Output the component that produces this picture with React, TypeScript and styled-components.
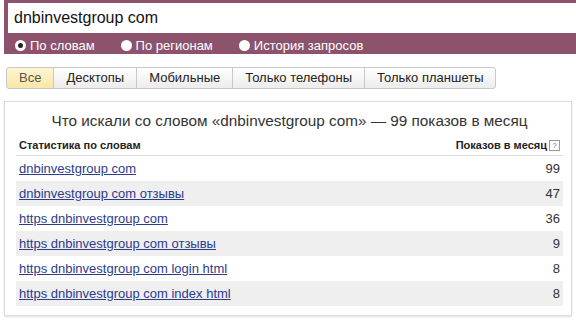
import React from "react";
import styled, { createGlobalStyle } from "styled-components";

const GlobalStyle = createGlobalStyle`
  body {
    margin: 0;
    background: #fff;
    font-family: "Liberation Sans", Arial, sans-serif;
  }
`;

const Page = styled.div`
  width: 576px;
  height: 324px;
  overflow: hidden;
`;

const SearchBar = styled.div`
  margin-left: 4px;
  background: #8d536c;
  padding: 3px 0 0 4px;
  height: 54px;
  box-sizing: border-box;
`;

const QueryInput = styled.div`
  height: 30px;
  background: #fff;
  font-size: 16px;
  line-height: 30px;
  padding-left: 6px;
  color: #111;
`;

const RadioRow = styled.div`
  display: flex;
  align-items: center;
  height: 24px;
  padding-left: 7px;
  gap: 26px;
`;

const RadioItem = styled.label`
  display: flex;
  align-items: center;
  gap: 4px;
  color: #fff;
  font-size: 13px;
`;

const RadioDot = styled.span<{ $checked?: boolean }>`
  width: 11px;
  height: 11px;
  border-radius: 50%;
  background: #fff;
  box-sizing: border-box;
  border: ${(p) => (p.$checked ? "3px solid #fff" : "none")};
  ${(p) => (p.$checked ? "background: #222;" : "")}
`;

const Tabs = styled.div`
  display: flex;
  margin: 13px 0 0 6px;
`;

const Tab = styled.div<{ $active?: boolean }>`
  height: 22px;
  box-sizing: border-box;
  padding: 0 12px;
  font-size: 13px;
  line-height: 20px;
  border: 1px solid #c8c8c8;
  margin-left: -1px;
  background: ${(p) =>
    p.$active
      ? "linear-gradient(#fff6d2, #f8e6a4)"
      : "linear-gradient(#ffffff, #ececec)"};
  color: ${(p) => (p.$active ? "#555" : "#222")};
  &:first-child {
    border-radius: 3px 0 0 3px;
    margin-left: 0;
  }
  &:last-child {
    border-radius: 0 3px 3px 0;
  }
`;

const Panel = styled.div`
  margin: 12px 0 0 4px;
  width: 568px;
  height: 215px;
  box-sizing: border-box;
  border: 1px solid #dcdcdc;
  box-shadow: 0 1px 2px rgba(0, 0, 0, 0.12);
  padding: 0 8px 0 11px;
`;

const Title = styled.div`
  text-align: center;
  font-size: 15.3px;
  color: #333;
  height: 33px;
  line-height: 38px;
`;

const Table = styled.div`
  display: flex;
  flex-direction: column;
`;

const HeadRow = styled.div`
  display: flex;
  justify-content: space-between;
  align-items: center;
  height: 20px;
  border-bottom: 1px solid #dedede;
  font-size: 11px;
  font-weight: bold;
  color: #222;
  padding: 0 3px;
`;

const HeadRight = styled.span`
  display: flex;
  align-items: center;
  gap: 2px;
`;

const HelpIcon = styled.span`
  width: 9px;
  height: 9px;
  border: 1px solid #999;
  font-size: 8px;
  line-height: 9px;
  text-align: center;
  color: #777;
  font-weight: normal;
`;

const Row = styled.div<{ $shaded?: boolean }>`
  display: flex;
  justify-content: space-between;
  align-items: center;
  height: 25px;
  padding: 0 3px;
  font-size: 13px;
  background: ${(p) => (p.$shaded ? "#efefef" : "transparent")};
`;

const Phrase = styled.a`
  color: #2c3c8c;
  text-decoration: underline;
`;

const Count = styled.span`
  color: #333;
`;

const rows: [string, number][] = [
  ["dnbinvestgroup com", 99],
  ["dnbinvestgroup com отзывы", 47],
  ["https dnbinvestgroup com", 36],
  ["https dnbinvestgroup com отзывы", 9],
  ["https dnbinvestgroup com login html", 8],
  ["https dnbinvestgroup com index html", 8],
];

const App = () => {
  return (
    <Page>
      <GlobalStyle />
      <SearchBar>
        <QueryInput>dnbinvestgroup com</QueryInput>
        <RadioRow>
          <RadioItem>
            <RadioDot $checked />
            По словам
          </RadioItem>
          <RadioItem>
            <RadioDot />
            По регионам
          </RadioItem>
          <RadioItem>
            <RadioDot />
            История запросов
          </RadioItem>
        </RadioRow>
      </SearchBar>
      <Tabs>
        <Tab $active>Все</Tab>
        <Tab>Десктопы</Tab>
        <Tab>Мобильные</Tab>
        <Tab>Только телефоны</Tab>
        <Tab>Только планшеты</Tab>
      </Tabs>
      <Panel>
        <Title>Что искали со словом «dnbinvestgroup com» — 99 показов в месяц</Title>
        <Table>
          <HeadRow>
            <span>Статистика по словам</span>
            <HeadRight>
              Показов в месяц
              <HelpIcon>?</HelpIcon>
            </HeadRight>
          </HeadRow>
          {rows.map(([phrase, count], i) => (
            <Row key={phrase} $shaded={i % 2 === 1}>
              <Phrase>{phrase}</Phrase>
              <Count>{count}</Count>
            </Row>
          ))}
        </Table>
      </Panel>
    </Page>
  );
};

export default App;
